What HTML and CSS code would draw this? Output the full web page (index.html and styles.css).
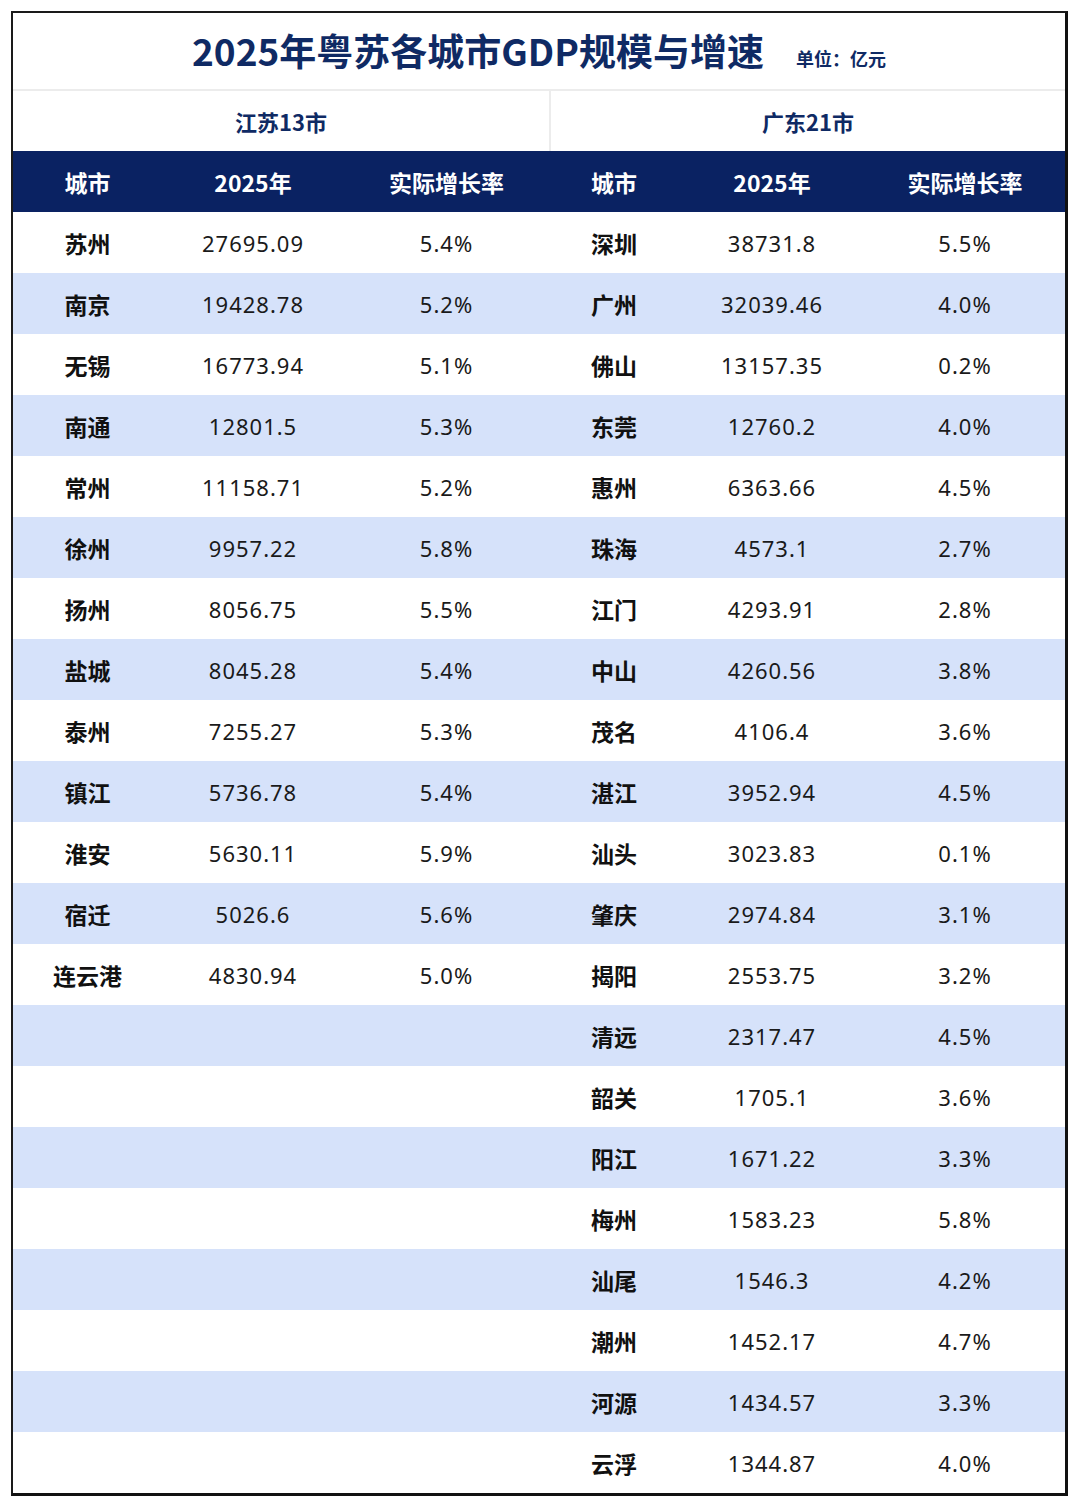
FILE: index.html
```html
<!DOCTYPE html>
<html lang="zh-CN">
<head>
<meta charset="utf-8">
<title>2025年粤苏各城市GDP规模与增速</title>
<link rel="stylesheet" href="styles.css">
</head>
<body>
<div class="sheet">
  <div class="title-bar">
    <h1 class="title">2025年粤苏各城市GDP规模与增速</h1>
    <span class="unit">单位：亿元</span>
  </div>
  <div class="groups">
    <div class="group">江苏13市</div>
    <div class="group group-right">广东21市</div>
  </div>
  <div class="table">
    <div class="row head">
      <div class="c c1">城市</div><div class="c c2">2025年</div><div class="c c3">实际增长率</div>
      <div class="c c4">城市</div><div class="c c5">2025年</div><div class="c c6">实际增长率</div>
    </div>
    <div class="row"><div class="c c1 city">苏州</div><div class="c c2">27695.09</div><div class="c c3">5.4%</div><div class="c c4 city">深圳</div><div class="c c5">38731.8</div><div class="c c6">5.5%</div></div>
    <div class="row alt"><div class="c c1 city">南京</div><div class="c c2">19428.78</div><div class="c c3">5.2%</div><div class="c c4 city">广州</div><div class="c c5">32039.46</div><div class="c c6">4.0%</div></div>
    <div class="row"><div class="c c1 city">无锡</div><div class="c c2">16773.94</div><div class="c c3">5.1%</div><div class="c c4 city">佛山</div><div class="c c5">13157.35</div><div class="c c6">0.2%</div></div>
    <div class="row alt"><div class="c c1 city">南通</div><div class="c c2">12801.5</div><div class="c c3">5.3%</div><div class="c c4 city">东莞</div><div class="c c5">12760.2</div><div class="c c6">4.0%</div></div>
    <div class="row"><div class="c c1 city">常州</div><div class="c c2">11158.71</div><div class="c c3">5.2%</div><div class="c c4 city">惠州</div><div class="c c5">6363.66</div><div class="c c6">4.5%</div></div>
    <div class="row alt"><div class="c c1 city">徐州</div><div class="c c2">9957.22</div><div class="c c3">5.8%</div><div class="c c4 city">珠海</div><div class="c c5">4573.1</div><div class="c c6">2.7%</div></div>
    <div class="row"><div class="c c1 city">扬州</div><div class="c c2">8056.75</div><div class="c c3">5.5%</div><div class="c c4 city">江门</div><div class="c c5">4293.91</div><div class="c c6">2.8%</div></div>
    <div class="row alt"><div class="c c1 city">盐城</div><div class="c c2">8045.28</div><div class="c c3">5.4%</div><div class="c c4 city">中山</div><div class="c c5">4260.56</div><div class="c c6">3.8%</div></div>
    <div class="row"><div class="c c1 city">泰州</div><div class="c c2">7255.27</div><div class="c c3">5.3%</div><div class="c c4 city">茂名</div><div class="c c5">4106.4</div><div class="c c6">3.6%</div></div>
    <div class="row alt"><div class="c c1 city">镇江</div><div class="c c2">5736.78</div><div class="c c3">5.4%</div><div class="c c4 city">湛江</div><div class="c c5">3952.94</div><div class="c c6">4.5%</div></div>
    <div class="row"><div class="c c1 city">淮安</div><div class="c c2">5630.11</div><div class="c c3">5.9%</div><div class="c c4 city">汕头</div><div class="c c5">3023.83</div><div class="c c6">0.1%</div></div>
    <div class="row alt"><div class="c c1 city">宿迁</div><div class="c c2">5026.6</div><div class="c c3">5.6%</div><div class="c c4 city">肇庆</div><div class="c c5">2974.84</div><div class="c c6">3.1%</div></div>
    <div class="row"><div class="c c1 city">连云港</div><div class="c c2">4830.94</div><div class="c c3">5.0%</div><div class="c c4 city">揭阳</div><div class="c c5">2553.75</div><div class="c c6">3.2%</div></div>
    <div class="row alt"><div class="c c1"></div><div class="c c2"></div><div class="c c3"></div><div class="c c4 city">清远</div><div class="c c5">2317.47</div><div class="c c6">4.5%</div></div>
    <div class="row"><div class="c c1"></div><div class="c c2"></div><div class="c c3"></div><div class="c c4 city">韶关</div><div class="c c5">1705.1</div><div class="c c6">3.6%</div></div>
    <div class="row alt"><div class="c c1"></div><div class="c c2"></div><div class="c c3"></div><div class="c c4 city">阳江</div><div class="c c5">1671.22</div><div class="c c6">3.3%</div></div>
    <div class="row"><div class="c c1"></div><div class="c c2"></div><div class="c c3"></div><div class="c c4 city">梅州</div><div class="c c5">1583.23</div><div class="c c6">5.8%</div></div>
    <div class="row alt"><div class="c c1"></div><div class="c c2"></div><div class="c c3"></div><div class="c c4 city">汕尾</div><div class="c c5">1546.3</div><div class="c c6">4.2%</div></div>
    <div class="row"><div class="c c1"></div><div class="c c2"></div><div class="c c3"></div><div class="c c4 city">潮州</div><div class="c c5">1452.17</div><div class="c c6">4.7%</div></div>
    <div class="row alt"><div class="c c1"></div><div class="c c2"></div><div class="c c3"></div><div class="c c4 city">河源</div><div class="c c5">1434.57</div><div class="c c6">3.3%</div></div>
    <div class="row"><div class="c c1"></div><div class="c c2"></div><div class="c c3"></div><div class="c c4 city">云浮</div><div class="c c5">1344.87</div><div class="c c6">4.0%</div></div>
  </div>
</div>
</body>
</html>
```
FILE: styles.css
```css
* { box-sizing: border-box; }
html, body { margin: 0; padding: 0; background: #ffffff; }
body {
  font-family: "Noto Sans", "Noto Sans CJK SC", sans-serif;
  color: #111111;
}
.sheet {
  margin: 11px 0 0 11px;
  width: 1057px;
  border-top: 2px solid #1a1a1a;
  border-left: 2px solid #1a1a1a;
  border-right: 3px solid #111111;
  border-bottom: 3px solid #111111;
  background: #ffffff;
}
.title-bar {
  height: 78px;
  border-bottom: 2px solid #ececec;
  display: flex;
  justify-content: center;
  align-items: baseline;
  gap: 32px;
  padding-top: 11px;
}
.title {
  margin: 0;
  font-family: "Noto Sans CJK SC", "Noto Sans", sans-serif;
  font-weight: 700;
  font-size: 37px;
  line-height: 52px;
  color: #0f2a64;
}
.unit {
  font-family: "Noto Sans CJK SC", sans-serif;
  font-weight: 700;
  font-size: 18px;
  color: #0f2a64;
}
.groups {
  display: grid;
  grid-template-columns: 536px 1fr;
  height: 60px;
}
.group {
  display: flex;
  align-items: center;
  justify-content: center;
  font-family: "Noto Sans CJK SC", sans-serif;
  font-weight: 700;
  font-size: 22px;
  color: #0f2a64;
}
.group-right { border-left: 2px solid #ececec; }
.row {
  display: grid;
  grid-template-columns: 149px 182px 205px 130px 186px 1fr;
  height: 61px;
  background: #ffffff;
}
.row.alt { background: #d6e2fa; }
.row.head {
  background: #0a2262;
  color: #ffffff;
}
.c {
  display: flex;
  align-items: center;
  justify-content: center;
  font-size: 22px;
  letter-spacing: 1px;
  color: #1a1a1a;
}
.row.head .c {
  color: #ffffff;
  font-family: "Noto Sans CJK SC", "Noto Sans", sans-serif;
  font-weight: 700;
  font-size: 23px;
  letter-spacing: 0;
}
.city {
  font-family: "Noto Sans CJK SC", sans-serif;
  font-weight: 700;
  font-size: 23px;
  letter-spacing: 0;
  color: #111111;
}
```
